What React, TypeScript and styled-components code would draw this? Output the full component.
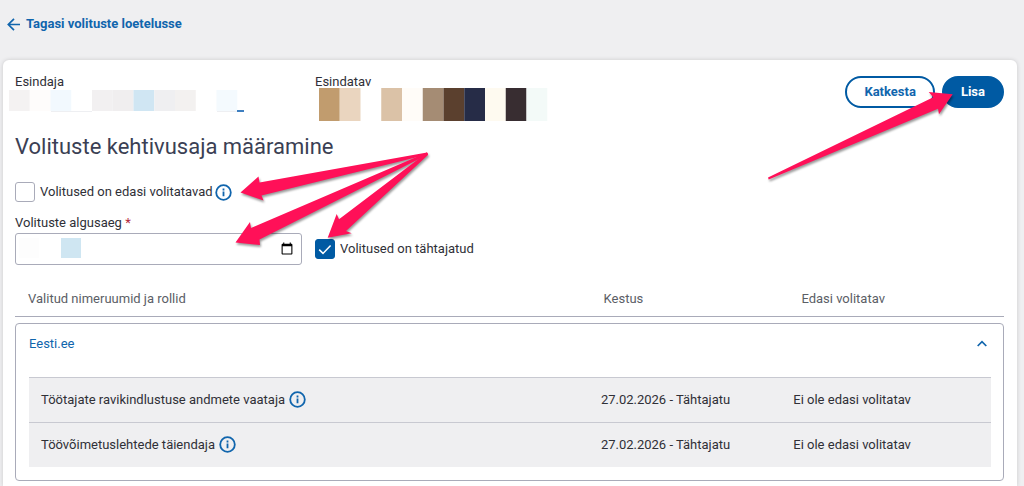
import React, { useState } from "react";
import styled, { createGlobalStyle, css } from "styled-components";

const blue = "#005aa3";
const linkBlue = "#1065ad";
const ink = "#2f3037";
const line = "#a9abb9";

const GlobalStyle = createGlobalStyle`
  *, *::before, *::after { box-sizing: border-box; }
  body {
    margin: 0;
    background: #efeff1;
    color: ${ink};
    font-family: Roboto, "Liberation Sans", sans-serif;
    font-size: 13px;
    line-height: 16px;
  }
`;

const Page = styled.div`
  min-height: 100vh;
  display: flex;
  flex-direction: column;
  padding: 16px 7px 0 3px;
`;

const BackLink = styled.a`
  display: inline-flex;
  align-items: center;
  align-self: flex-start;
  gap: 6px;
  margin: 0 0 28px 4px;
  color: ${linkBlue};
  font-weight: 700;
  text-decoration: none;
`;

const Card = styled.main`
  position: relative;
  flex: 1;
  padding: 14px 13px 5px 12px;
  background: #fff;
  border-radius: 6px 6px 0 0;
  box-shadow: 0 0 4px rgba(0, 0, 0, 0.16);
`;

const CardHeader = styled.header`
  display: flex;
  height: 48px;
`;

const Party = styled.div`
  flex: 0 0 300px;
`;

const PartyName = styled.div`
  line-height: 16px;
`;

const Mosaic = styled.svg<{ $shift: number }>`
  display: block;
  margin-left: ${(p) => p.$shift}px;
`;

const Actions = styled.div`
  display: flex;
  align-items: flex-start;
  gap: 7px;
  margin-left: auto;
  padding-top: 2px;
`;

const Button = styled.button<{ $primary?: boolean }>`
  height: 32px;
  padding: 0 17px;
  border: 2px solid ${blue};
  border-radius: 16px;
  background: ${(p) => (p.$primary ? blue : "#fff")};
  color: ${(p) => (p.$primary ? "#fff" : linkBlue)};
  font: inherit;
  font-weight: 700;
  cursor: pointer;
`;

const Title = styled.h1`
  margin: 11px 0 21px;
  color: #3b3f54;
  font-size: 22px;
  font-weight: 400;
  line-height: 28px;
`;

const Choice = styled.div`
  display: flex;
  align-items: center;
  gap: 5px;
`;

const Labelled = styled.span`
  display: flex;
  align-items: center;
  gap: 2px;
`;

const Checkbox = styled.input`
  appearance: none;
  width: 20px;
  height: 20px;
  margin: 0;
  border: 1px solid ${line};
  border-radius: 3px;
  background: #fff;
  &:checked {
    border-color: ${blue};
    background: ${blue};
  }
`;

const CheckBoxFrame = styled.span`
  position: relative;
  display: flex;
  svg {
    position: absolute;
    inset: 0;
    pointer-events: none;
  }
`;

const InfoButton = styled.button`
  display: inline-flex;
  padding: 0;
  border: 0;
  background: none;
  cursor: pointer;
`;

const DateRow = styled.div`
  display: flex;
  align-items: flex-end;
  gap: 13px;
  margin-top: 13px;
`;

const DateField = styled.div`
  flex: 0 0 287px;
`;

const FieldLabel = styled.label`
  display: block;
  margin-bottom: 2px;
`;

const Required = styled.span`
  color: #b3273b;
`;

const InputFrame = styled.div`
  position: relative;
  svg {
    position: absolute;
    left: 4px;
    top: 5px;
    pointer-events: none;
  }
`;

const DateInput = styled.input`
  display: block;
  width: 100%;
  height: 32px;
  padding: 0 5px 0 12px;
  border: 1px solid ${line};
  border-radius: 3px;
  background: #fff;
  color: ${ink};
  font: inherit;
  &::-webkit-datetime-edit {
    opacity: 0;
  }
  &::-webkit-calendar-picker-indicator {
    width: 14px;
    height: 14px;
  }
`;

const EndChoice = styled(Choice)`
  height: 32px;
`;

const columns = css`
  width: 100%;
  table-layout: fixed;
  border-collapse: collapse;
  th, td {
    padding: 0 12px;
    text-align: left;
    font-weight: 400;
  }
`;

const Headings = styled.table`
  ${columns}
  margin-top: 17px;
  border-bottom: 1px solid ${line};
  th {
    height: 34px;
    padding-left: 13px;
    color: #5b5e66;
  }
`;

const Panel = styled.section`
  margin-top: 6px;
  padding: 0 12px 13px 13px;
  border: 1px solid ${line};
  border-radius: 4px;
`;

const PanelToggle = styled.button`
  display: flex;
  align-items: center;
  justify-content: space-between;
  width: 100%;
  height: 40px;
  margin-bottom: 13px;
  padding: 0 4px 0 0;
  border: 0;
  background: none;
  color: ${linkBlue};
  font: inherit;
  cursor: pointer;
`;

const Roles = styled.table`
  ${columns}
  background: #efeff1;
  td {
    height: 45px;
    border-top: 1px solid #c8c9d1;
  }
`;

const RoleName = styled.span`
  display: flex;
  align-items: center;
  gap: 4px;
`;

const LeftArrows = styled.svg`
  position: absolute;
  left: 232px;
  top: 90px;
  pointer-events: none;
  filter: drop-shadow(1px 2px 1px rgba(0, 0, 0, 0.4));
`;

const RightArrow = styled.svg`
  position: absolute;
  right: 61px;
  top: 30px;
  pointer-events: none;
  filter: drop-shadow(1px 2px 1px rgba(0, 0, 0, 0.4));
`;

function Info({ label }: { label: string }) {
  return (
    <InfoButton type="button" aria-label={label}>
      <svg width="17" height="17" viewBox="0 0 17 17" fill="none">
        <circle cx="8.5" cy="8.5" r="7.3" stroke={linkBlue} strokeWidth="1.8" />
        <path d="M8.5 7.6v4.6M8.5 4.6v1.8" stroke={linkBlue} strokeWidth="1.8" />
      </svg>
    </InfoButton>
  );
}

type Cells = [number, string][];

function Blocks({ cells, height }: { cells: Cells; height: number }) {
  return (
    <>
      {cells.map(([i, fill]) => (
        <rect key={i} x={i * 20.75} width="20.75" height={height} fill={fill} />
      ))}
    </>
  );
}

const representative: Cells = [
  [0, "#f4f2f2"], [1, "#fefcfb"], [2, "#f2f9fe"], [4, "#f2f0f1"], [5, "#f0eeef"],
  [6, "#d0e6f3"], [7, "#efeff1"], [8, "#f3f1f0"], [10, "#f4fafe"],
];

const represented: Cells = [
  [0, "#c19c6e"], [1, "#ead5bf"], [3, "#dbc2a7"], [4, "#fffcf8"], [5, "#a58c74"],
  [6, "#5b402e"], [7, "#262c47"], [8, "#fefaf0"], [9, "#382d31"], [10, "#f3faf8"],
];

const roles = ["Töötajate ravikindlustuse andmete vaataja", "Töövõimetuslehtede täiendaja"];

function Columns() {
  return (
    <colgroup>
      <col style={{ width: "58.2%" }} />
      <col style={{ width: "20%" }} />
      <col />
    </colgroup>
  );
}

export default function App() {
  const [delegable, setDelegable] = useState(false);
  const [openEnded, setOpenEnded] = useState(true);
  const [open, setOpen] = useState(true);

  return (
    <>
      <GlobalStyle />
      <Page>
        <BackLink href="#">
          <svg width="13" height="13" viewBox="0 0 13 13" fill="none" stroke={linkBlue} strokeWidth="1.7">
            <path d="M13 6.5H1.4M7 .8 1.3 6.5 7 12.2" />
          </svg>
          Tagasi volituste loetelusse
        </BackLink>

        <Card>
          <CardHeader>
            <Party>
              <PartyName>Esindaja</PartyName>
              <Mosaic $shift={-6} width="235" height="22" aria-hidden>
                <Blocks cells={representative} height={21} />
                <path d="M42 21.5h41M208 21.5h20" stroke="#eeeff2" />
                <path d="M228 21h7" stroke="#3e7fc0" strokeWidth="2" />
              </Mosaic>
            </Party>
            <Party>
              <PartyName>Esindatav</PartyName>
              <Mosaic $shift={4} width="229" height="33" viewBox="0 2 229 33" aria-hidden overflow="visible">
                <Blocks cells={represented} height={33} />
              </Mosaic>
            </Party>
            <Actions>
              <Button type="button">Katkesta</Button>
              <Button type="button" $primary>Lisa</Button>
            </Actions>
          </CardHeader>

          <Title>Volituste kehtivusaja määramine</Title>

          <Choice>
            <Checkbox
              id="delegable"
              type="checkbox"
              checked={delegable}
              onChange={(e) => setDelegable(e.target.checked)}
            />
            <Labelled>
              <label htmlFor="delegable">Volitused on edasi volitatavad</label>
              <Info label="Edasi volitamise selgitus" />
            </Labelled>
          </Choice>

          <DateRow>
            <DateField>
              <FieldLabel htmlFor="start">
                Volituste algusaeg <Required>*</Required>
              </FieldLabel>
              <InputFrame>
                <DateInput id="start" type="date" />
                <svg width="63" height="20" aria-hidden>
                  <rect width="20" height="20" fill="#fdfdfd" />
                  <rect x="42" width="20" height="20" fill="#cfe6f2" />
                </svg>
              </InputFrame>
            </DateField>
            <EndChoice>
              <CheckBoxFrame>
                <Checkbox
                  id="open-ended"
                  type="checkbox"
                  checked={openEnded}
                  onChange={(e) => setOpenEnded(e.target.checked)}
                />
                <svg width="20" height="20" viewBox="0 0 20 20" fill="none" stroke="#fff" strokeWidth="1.5">
                  <path d="M4.2 10.6 8 14.4l7.6-8" />
                </svg>
              </CheckBoxFrame>
              <label htmlFor="open-ended">Volitused on tähtajatud</label>
            </EndChoice>
          </DateRow>

          <Headings>
            <Columns />
            <thead>
              <tr>
                <th scope="col">Valitud nimeruumid ja rollid</th>
                <th scope="col">Kestus</th>
                <th scope="col">Edasi volitatav</th>
              </tr>
            </thead>
          </Headings>

          <Panel>
            <PanelToggle type="button" aria-expanded={open} onClick={() => setOpen(!open)}>
              Eesti.ee
              <svg width="10" height="7" viewBox="0 0 10 7" fill="none" stroke={linkBlue} strokeWidth="1.7">
                <path d="M.7 6 5 1.6 9.3 6" />
              </svg>
            </PanelToggle>
            {open && (
              <Roles>
                <Columns />
                <tbody>
                  {roles.map((role) => (
                    <tr key={role}>
                      <td>
                        <RoleName>
                          {role}
                          <Info label={role} />
                        </RoleName>
                      </td>
                      <td>27.02.2026 - Tähtajatu</td>
                      <td>Ei ole edasi volitatav</td>
                    </tr>
                  ))}
                </tbody>
              </Roles>
            )}
          </Panel>

          <LeftArrows width="196" height="98" viewBox="235 150 196 98" fill="#ff1058" aria-hidden>
            <path d="M240.5 192.5 258.5 176.5 259.5 182.5 427 152.5 428 154.5 261.5 195.5 263.5 200.5Z" />
            <path d="M235.5 242.5 250 222 251 228 427 152.5 428 154.5 259.5 239.5 260 245Z" />
            <path d="M327.7 237.7 336.7 214 339 219.3 427 152.5 428 155 346 231 351.7 233.3Z" />
          </LeftArrows>
          <RightArrow width="190" height="94" viewBox="766 90 190 94" fill="#ff1058" aria-hidden>
            <path d="M952.7 94.3 928.7 92 933.3 97.3 768 177.5 768.7 179.5 938 108.7 939 114.3Z" />
          </RightArrow>
        </Card>
      </Page>
    </>
  );
}
